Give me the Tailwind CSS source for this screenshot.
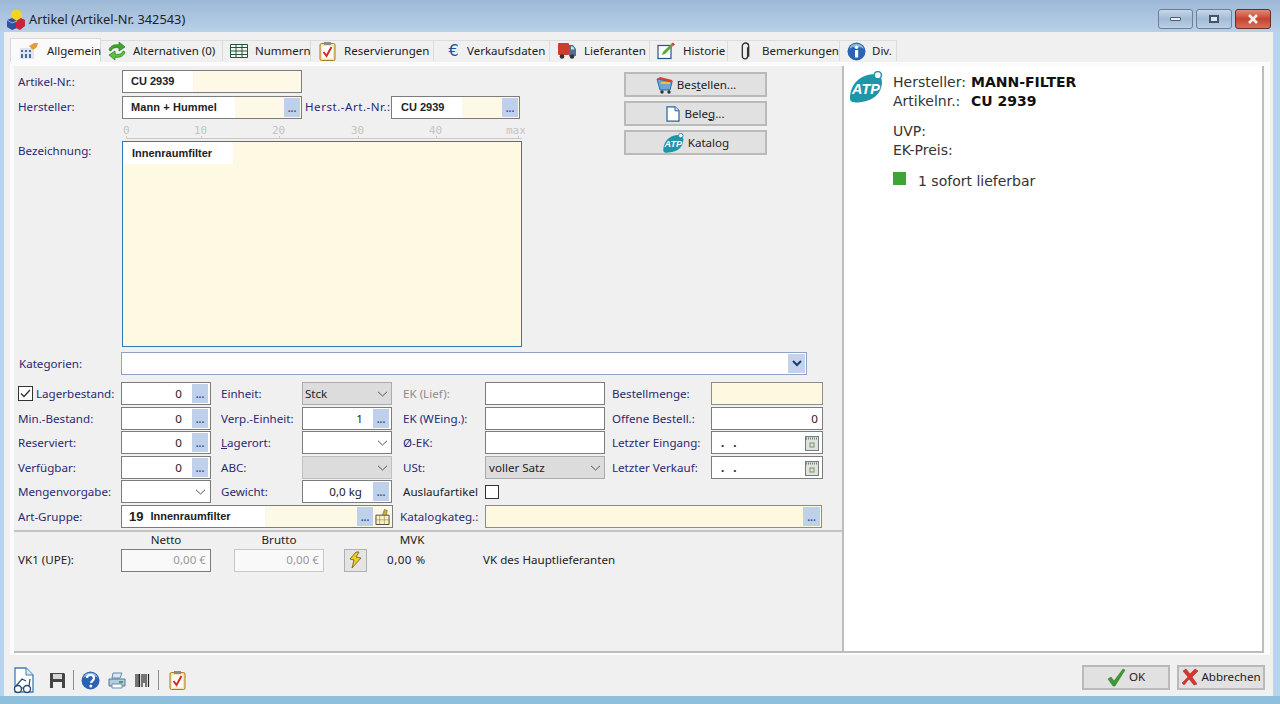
<!DOCTYPE html>
<html lang="de">
<head>
<meta charset="utf-8">
<title>Artikel</title>
<script src="https://cdn.jsdelivr.net/npm/@tailwindcss/browser@4"></script>
</head>
<body class="w-[1280px] h-[704px] overflow-hidden flex flex-col bg-[#b7d3ee] font-['Noto_Sans',sans-serif] text-[11.6px] leading-none text-[#222]">

<!-- Title bar -->
<header class="h-[32px] shrink-0 flex items-center bg-gradient-to-b from-[#9db8d6] to-[#b9d0e8] pl-[6px] pr-[9px] pt-[6px]">
  <svg width="20" height="22" viewBox="0 0 20 22" class="mr-[3px]"><circle cx="10.500" cy="7" r="5.500" fill="#f4d422"/><path d="M1 12l5-2 5 3v7l-5 2-5-3z" fill="#33509e"/><path d="M10 13l5-3 4 2v6l-5 4-4-2z" fill="#c8243c"/><path d="M1 12l5 3 5-2" fill="none" stroke="#9cb2e0"/></svg>
  <span class="text-[12.800px] text-[#222] flex-1">Artikel (Artikel-Nr. 342543)</span>
  <div class="flex gap-[3px] items-start">
    <div class="w-[35px] h-[20px] rounded-[3px] border border-[#6c7f96] bg-gradient-to-b from-[#c6d6e8] via-[#a3bbd6] to-[#bcd0e6] flex items-center justify-center"><div class="w-[11px] h-[4px] bg-[#e8eef5] border border-[#4c5c70] rounded-[1px]"></div></div>
    <div class="w-[36px] h-[20px] rounded-[3px] border border-[#6c7f96] bg-gradient-to-b from-[#c6d6e8] via-[#a3bbd6] to-[#bcd0e6] flex items-center justify-center"><div class="w-[10px] h-[8px] border-2 border-[#43536a] bg-[#dfe8f2]"></div></div>
    <div class="w-[36px] h-[20px] rounded-[3px] border border-[#6b2c22] bg-gradient-to-b from-[#dc8a78] via-[#c5432f] to-[#d4705c] flex items-center justify-center"><svg width="12" height="10" viewBox="0 0 12 10"><path d="M2 1l8 8M10 1L2 9" stroke="#f5f0ee" stroke-width="2.600" fill="none"/></svg></div>
  </div>
</header>

<!-- Client area -->
<div class="flex-1 min-h-0 ml-[4px] mr-[7px] bg-[#f0f0f0] flex flex-col">
  <!-- Tabs -->
  <nav class="h-[30px] shrink-0 pl-[6px] flex items-start pt-[6px] text-[11.500px] whitespace-nowrap">
    <div class="w-[91px] h-[24px] bg-[#fafafa] border border-b-0 border-[#d9d9d9] flex items-center"><span class="w-[36px] shrink-0 flex justify-center">
      <svg width="20" height="18" viewBox="0 0 20 18"><rect x="1" y="6" width="14" height="11" fill="#dfe5ee"/><path d="M2 8h2v2H2zm4 0h2v2H6zm4 0h2v2h-2zM2 12h2v4H2zm4 0h2v4H6zm4 0h2v4h-2z" fill="#4b6a9c"/><path d="M10 4l5-3h4l-1 4-4 3z" fill="#e0a03a"/></svg></span><span>Allgemein</span></div>
    <div class="w-[122px] h-[21px] mt-[2px] bg-[#f0f0f0] border-r border-t border-[#dcdcdc] flex items-center"><span class="w-[32px] shrink-0 flex justify-center">
      <svg width="20" height="20" viewBox="0 0 20 20"><path d="M2 9c1-4 5-6 10-5V1l6 5-6 4V7C8 6 5 7 4 10z" fill="#3fa82c" stroke="#1f7a18" stroke-width=".7"/><path d="M18 11c-1 4-5 6-10 5v3l-6-5 6-4v3c4 1 7 0 8-3z" fill="#5cc23a" stroke="#1f7a18" stroke-width=".7"/></svg></span><span>Alternativen (0)</span></div>
    <div class="w-[88px] h-[21px] mt-[2px] border-r border-t border-[#dcdcdc] flex items-center"><span class="w-[32px] shrink-0 flex justify-center">
      <svg width="18" height="14" viewBox="0 0 18 14"><path d="M.5.500h17v13H.5zM.5 3.500h17M.5 7h17M.5 10.500h17M6 .5v13M12 .5v13" fill="#f4f7f2" stroke="#27553c"/></svg></span><span>Nummern</span></div>
    <div class="w-[123px] h-[21px] mt-[2px] border-r border-t border-[#dcdcdc] flex items-center"><span class="w-[33px] shrink-0 flex justify-center">
      <svg width="17" height="20" viewBox="0 0 17 20"><rect x="1" y="2.500" width="15" height="17" rx="1.500" fill="#f3e3a8" stroke="#a87b1e"/><rect x="3" y="5" width="11" height="12.500" fill="#fff"/><rect x="5" y="1" width="7" height="3" fill="#8c8c8c"/><path d="M4.500 11l3 4 5-9" fill="none" stroke="#d62a1e" stroke-width="2"/></svg></span><span>Reservierungen</span></div>
    <div class="w-[116px] h-[21px] mt-[2px] border-r border-t border-[#dcdcdc] flex items-center"><span class="w-[33px] shrink-0 pl-[6px] flex justify-center font-['DejaVu_Sans',sans-serif] text-[16px] text-[#1f4fa8]">€</span><span>Verkaufsdaten</span></div>
    <div class="w-[100px] h-[21px] mt-[2px] border-r border-t border-[#dcdcdc] flex items-center"><span class="w-[34px] shrink-0 flex justify-center">
      <svg width="20" height="18" viewBox="0 0 20 18"><rect x="1" y="1" width="11" height="12" rx="1" fill="#cf3b2c"/><path d="M12 3h4l3 4v7h-7z" fill="#55708f"/><path d="M14 4.500h2l1.500 3H14z" fill="#cfe2f2"/><circle cx="5" cy="14.500" r="2.300" fill="#333"/><circle cx="15" cy="14.500" r="2.300" fill="#333"/></svg></span><span>Lieferanten</span></div>
    <div class="w-[78px] h-[21px] mt-[2px] border-r border-t border-[#dcdcdc] flex items-center"><span class="w-[33px] shrink-0 flex justify-center">
      <svg width="19" height="18" viewBox="0 0 19 18"><rect x="1" y="3.500" width="13" height="13" fill="#fff" stroke="#27508a" stroke-width="1.200"/><path d="M5 13l1-3 8-8 2 2-8 8z" fill="#55a83a"/><path d="M14 2l2-1.500 2 2-2 1.500z" fill="#d23a3a"/></svg></span><span>Historie</span></div>
    <div class="w-[112px] h-[21px] mt-[2px] border-r border-t border-[#dcdcdc] flex items-center"><span class="w-[34px] shrink-0 flex justify-center">
      <svg width="11" height="19" viewBox="0 0 10 18"><path d="M7 5v8.500a2.500 2.500 0 0 1-5 0V4a3 3 0 0 1 6 0v10" fill="none" stroke="#333" stroke-width="1.300"/></svg></span><span>Bemerkungen</span></div>
    <div class="w-[57px] h-[21px] mt-[2px] border-r border-t border-[#dcdcdc] flex items-center"><span class="w-[32px] shrink-0 flex justify-center">
      <svg width="19" height="19" viewBox="0 0 19 19"><circle cx="9.500" cy="9.500" r="9" fill="#2a62b4"/><path d="M2 7a8 8 0 0 1 15 0c-4-3-11-3-15 0z" fill="#8db4e6"/><rect x="8" y="8" width="3.200" height="7.500" fill="#fff"/><circle cx="9.600" cy="5.200" r="1.800" fill="#fff"/></svg></span><span>Div.</span></div>
  </nav>

  <!-- Tab page -->
  <main class="ml-[6px] mr-[3px] h-[593px] shrink-0 bg-[#fbfbfb] pl-[4px] pr-[6px] pt-[4px]">
    <div class="h-[587px] flex border-b-2 border-[#bdbdbd] border-r-2">
      <!-- Left form -->
      <section class="w-[830px] shrink-0 bg-[#f0f0f0] border-r-2 border-[#bdbdbd] flex flex-col text-[#2a2a72]">
        <div class="flex h-[280px]">
          <div class="w-[510px] shrink-0 pl-[4px] pt-[4px]">
            <div class="flex h-[26px]">
              <span class="w-[104px] pt-[6px]">Artikel-Nr.:</span>
              <div class="w-[180px] h-[23px] border border-[#7c7c7c] bg-[#fdf9e6] flex items-center"><span class="w-[70px] h-full pl-[8px] bg-white flex items-center font-['Liberation_Sans',sans-serif] font-bold text-[11px] text-[#222]">CU 2939</span></div>
            </div>
            <div class="flex h-[26px]">
              <span class="w-[104px] pt-[5px]">Hersteller:</span>
              <div class="w-[180px] h-[23px] border border-[#7c7c7c] bg-[#fdf9e6] flex items-center">
                <span class="w-[112px] h-full pl-[8px] bg-white flex items-center font-['Liberation_Sans',sans-serif] font-bold text-[11px] tracking-[0.1px] text-[#222]">Mann + Hummel</span>
                <span class="flex-1"></span>
                <span class="w-[16px] h-[19px] mr-px bg-[#bfd0ea] text-[#33508a] font-bold text-[10px] flex items-end justify-center pb-[4px]">...</span>
              </div>
              <span class="w-[89px] pl-[3px] pt-[5px] whitespace-nowrap tracking-[0.5px]">Herst.-Art.-Nr.:</span>
              <div class="w-[129px] h-[23px] border border-[#7c7c7c] bg-[#fdf9e6] flex items-center">
                <span class="w-[70px] h-full pl-[9px] bg-white flex items-center font-['Liberation_Sans',sans-serif] font-bold text-[11px] text-[#222]">CU 2939</span>
                <span class="flex-1"></span>
                <span class="w-[16px] h-[19px] mr-px bg-[#bfd0ea] text-[#33508a] font-bold text-[10px] flex items-end justify-center pb-[4px]">...</span>
              </div>
            </div>
            <!-- Ruler -->
            <div class="ml-[105px] w-[410px] h-[19px] font-['DejaVu_Sans_Mono',monospace] text-[11px] text-[#c4c4c4] flex flex-col">
              <div class="flex h-[14px] pt-[3px]">
                <span class="w-[71px]">0</span><span class="w-[78px]">10</span><span class="w-[79px]">20</span><span class="w-[78px]">30</span><span class="w-[77px]">40</span><span>max</span>
              </div>
              <svg width="400" height="3" viewBox="0 0 400 3" class="ml-[3px]"><path d="M0 2.500h396M.5 0v3M75.500 0v3M153.500 0v3M232.500 0v3M310.500 0v3M392.500 0v3" stroke="#c8c8c8" fill="none"/></svg>
            </div>
            <div class="flex">
              <span class="w-[104px] pt-[4px]">Bezeichnung:</span>
              <div class="w-[400px] h-[206px] border border-[#2f78b8] bg-[#fdf9e3]"><div class="w-[110px] h-[22px] pl-[9px] bg-white flex items-center font-['Liberation_Sans',sans-serif] font-bold text-[11px] text-[#222]">Innenraumfilter</div></div>
            </div>
          </div>
          <div class="w-[143px] shrink-0 ml-[100px] pt-[6px] flex flex-col gap-[4px] text-[#222]">
            <div class="h-[25px] bg-[#e1e1e1] border-2 border-[#b9b9b9] flex items-center justify-center gap-[1px]">
              <svg width="21" height="20" viewBox="0 0 21 20"><path d="M2 4l15 3-2 8H5z" fill="#6fa5cf" stroke="#2f6a9a"/><path d="M2 4l3-2 12 3 1 2z" fill="#d83c32"/><path d="M6 8h9" stroke="#e6c63a" stroke-width="2"/><circle cx="7" cy="17" r="1.700" fill="#333"/><circle cx="14" cy="17" r="1.700" fill="#333"/></svg>
              <span>Bes<u>t</u>ellen...</span></div>
            <div class="h-[25px] bg-[#e1e1e1] border-2 border-[#b9b9b9] flex items-center justify-center gap-[4px]">
              <svg width="14" height="16" viewBox="0 0 14 16"><path d="M1 .8h8l4 4v10.400H1z" fill="#fff" stroke="#2b5f9c" stroke-width="1.200"/><path d="M9 .8v4h4" fill="#dbe8f5" stroke="#2b5f9c"/></svg>
              <span>Bele<u>g</u>...</span></div>
            <div class="h-[25px] bg-[#e1e1e1] border-2 border-[#b9b9b9] flex items-center justify-center gap-[4px]">
              <svg width="22" height="20" viewBox="0 0 34 31"><path d="M2 27C2 14 10 4 24 3c7 0 9 3 9 8 0 11-9 18-20 19-6 1-11 1-11-3z" fill="#1e96a8"/><circle cx="29" cy="4" r="3.500" fill="#fff" stroke="#1e96a8" stroke-width="1.500"/><text x="4" y="22" font-family="Liberation Sans" font-weight="bold" font-style="italic" font-size="14" fill="#fff">ATP</text></svg>
              <span>Katalog</span></div>
          </div>
        </div>

        <!-- Kategorien -->
        <div class="flex items-center h-[23px] mt-[6px] pl-[5px]">
          <span class="w-[102px]">Kategorien:</span>
          <div class="w-[686px] h-[23px] border border-[#8fa3c0] bg-white flex items-center justify-end pr-px">
            <span class="w-[17px] h-[19px] bg-[#c3d3ea] flex items-center justify-center"><svg width="10" height="7" viewBox="0 0 10 7"><path d="M1 1l4 4 4-4" stroke="#1f3a6e" stroke-width="2" fill="none"/></svg></span>
          </div>
        </div>

        <!-- Main field grid -->
        <div class="grid mt-[7px] pl-[4px] grid-cols-[103px_90px_91px_90px_93px_120px_106px_112px] grid-rows-[25px_24px_25px_24px_25px_24px] items-start">
          <span class="flex items-center h-[23px] gap-[3px] whitespace-nowrap"><span class="w-[15px] h-[15px] border border-[#333] bg-white flex items-center justify-center"><svg width="11" height="9" viewBox="0 0 11 9"><path d="M1 4.500l3 3 6-6.500" stroke="#333" stroke-width="1.300" fill="none"/></svg></span>Lagerbestand:</span>
          <div class="h-[23px] border border-[#7c7c7c] bg-white flex items-center justify-end pr-[2px] text-[#222]"><span class="pr-[10px]">0</span><span class="w-[16px] h-[19px] bg-[#bfd0ea] text-[#33508a] font-bold text-[10px] flex items-end justify-center pb-[4px]">...</span></div>
          <span class="h-[23px] pl-[10px] flex items-center">Einheit:</span>
          <div class="h-[23px] border border-[#ababab] bg-[#dcdcdc] flex items-center justify-between pl-[2px] pr-[3px] text-[#222]"><span>Stck</span><svg width="11" height="6" viewBox="0 0 11 6"><path d="M1 .8l4.500 4.200L10 .8" stroke="#555" fill="none"/></svg></div>
          <span class="h-[23px] pl-[11px] flex items-center text-[#8c8c8c]">EK (Lief):</span>
          <div class="h-[23px] border border-[#7c7c7c] bg-white"></div>
          <span class="h-[23px] pl-[7px] flex items-center">Bestellmenge:</span>
          <div class="h-[23px] border border-[#8c8c8c] bg-[#fdf9e0]"></div>

          <span class="h-[23px] flex items-center">Min.-Bestand:</span>
          <div class="h-[23px] border border-[#7c7c7c] bg-white flex items-center justify-end pr-[2px] text-[#222]"><span class="pr-[10px]">0</span><span class="w-[16px] h-[19px] bg-[#bfd0ea] text-[#33508a] font-bold text-[10px] flex items-end justify-center pb-[4px]">...</span></div>
          <span class="h-[23px] pl-[10px] flex items-center">Verp.-Einheit:</span>
          <div class="h-[23px] border border-[#7c7c7c] bg-white flex items-center justify-end pr-[2px] text-[#222]"><span class="pr-[10px]">1</span><span class="w-[16px] h-[19px] bg-[#bfd0ea] text-[#33508a] font-bold text-[10px] flex items-end justify-center pb-[4px]">...</span></div>
          <span class="h-[23px] pl-[11px] flex items-center">EK (WEing.):</span>
          <div class="h-[23px] border border-[#7c7c7c] bg-white"></div>
          <span class="h-[23px] pl-[7px] flex items-center">Offene Bestell.:</span>
          <div class="h-[23px] border border-[#7c7c7c] bg-white flex items-center justify-end pr-[4px] text-[#222]">0</div>

          <span class="h-[23px] flex items-center">Reserviert:</span>
          <div class="h-[23px] border border-[#7c7c7c] bg-white flex items-center justify-end pr-[2px] text-[#222]"><span class="pr-[10px]">0</span><span class="w-[16px] h-[19px] bg-[#bfd0ea] text-[#33508a] font-bold text-[10px] flex items-end justify-center pb-[4px]">...</span></div>
          <span class="h-[23px] pl-[10px] flex items-center"><span><u>L</u>agerort:</span></span>
          <div class="h-[23px] border border-[#7c7c7c] bg-white flex items-center justify-end pr-[3px]"><svg width="11" height="6" viewBox="0 0 11 6"><path d="M1 .8l4.500 4.200L10 .8" stroke="#555" fill="none"/></svg></div>
          <span class="h-[23px] pl-[11px] flex items-center">Ø-EK:</span>
          <div class="h-[23px] border border-[#7c7c7c] bg-white"></div>
          <span class="h-[23px] pl-[7px] flex items-center">Letzter Eingang:</span>
          <div class="h-[23px] border border-[#7c7c7c] bg-white flex items-center justify-between pl-[9px] pr-[3px] text-[#222]"><span class="font-bold tracking-[3px]">. .</span><svg width="14" height="16" viewBox="0 0 14 16"><rect x=".5" y="1.500" width="13" height="14" fill="#dfe3dc" stroke="#6f7f78"/><path d="M1 3.500h12" stroke="#6f7f78" stroke-width="2" stroke-dasharray="1 1"/><rect x="5" y="8" width="4" height="4" fill="none" stroke="#7f8f70"/></svg></div>

          <span class="h-[23px] flex items-center">Verfügbar:</span>
          <div class="h-[23px] border border-[#7c7c7c] bg-white flex items-center justify-end pr-[2px] text-[#222]"><span class="pr-[10px]">0</span><span class="w-[16px] h-[19px] bg-[#bfd0ea] text-[#33508a] font-bold text-[10px] flex items-end justify-center pb-[4px]">...</span></div>
          <span class="h-[23px] pl-[10px] flex items-center">ABC:</span>
          <div class="h-[23px] border border-[#c0c0c0] bg-[#dcdcdc] flex items-center justify-end pr-[3px]"><svg width="11" height="6" viewBox="0 0 11 6"><path d="M1 .8l4.500 4.200L10 .8" stroke="#555" fill="none"/></svg></div>
          <span class="h-[23px] pl-[11px] flex items-center">USt:</span>
          <div class="h-[23px] border border-[#ababab] bg-[#dcdcdc] flex items-center justify-between pl-[3px] pr-[3px] text-[#222]"><span>voller Satz</span><svg width="11" height="6" viewBox="0 0 11 6"><path d="M1 .8l4.500 4.200L10 .8" stroke="#555" fill="none"/></svg></div>
          <span class="h-[23px] pl-[7px] flex items-center">Letzter Verkauf:</span>
          <div class="h-[23px] border border-[#7c7c7c] bg-white flex items-center justify-between pl-[9px] pr-[3px] text-[#222]"><span class="font-bold tracking-[3px]">. .</span><svg width="14" height="16" viewBox="0 0 14 16"><rect x=".5" y="1.500" width="13" height="14" fill="#dfe3dc" stroke="#6f7f78"/><path d="M1 3.500h12" stroke="#6f7f78" stroke-width="2" stroke-dasharray="1 1"/><rect x="5" y="8" width="4" height="4" fill="none" stroke="#7f8f70"/></svg></div>

          <span class="h-[23px] flex items-center">Mengenvorgabe:</span>
          <div class="h-[23px] border border-[#7c7c7c] bg-white flex items-center justify-end pr-[4px]"><svg width="11" height="6" viewBox="0 0 11 6"><path d="M1 .8l4.500 4.200L10 .8" stroke="#555" fill="none"/></svg></div>
          <span class="h-[23px] pl-[10px] flex items-center">Gewicht:</span>
          <div class="h-[23px] border border-[#7c7c7c] bg-white flex items-center justify-end pr-[2px] text-[#222]"><span class="pr-[11px]">0,0 kg</span><span class="w-[16px] h-[19px] bg-[#bfd0ea] text-[#33508a] font-bold text-[10px] flex items-end justify-center pb-[4px]">...</span></div>
          <span class="h-[23px] pl-[11px] flex items-center text-[#222]">Auslaufartikel</span>
          <div class="h-[23px] flex items-center"><span class="w-[14px] h-[14px] border border-[#333] bg-white"></span></div>
          <span></span><span></span>

          <span class="h-[23px] flex items-center">Art-Gruppe:</span>
          <div class="col-span-3 w-[272px] h-[23px] border border-[#7c7c7c] bg-[#fdf9e6] flex items-center text-[#222]">
            <span class="w-[143px] h-full bg-white pl-[7px] flex items-center gap-[7px] font-['Liberation_Sans',sans-serif] font-bold text-[11px]"><span class="text-[13px]">19</span><span>Innenraumfilter</span></span>
            <span class="flex-1"></span>
            <span class="w-[16px] h-[19px] bg-[#bfd0ea] text-[#33508a] font-bold text-[10px] flex items-end justify-center pb-[4px]">...</span>
            <span class="w-[19px] flex justify-center"><svg width="15" height="18" viewBox="0 0 16 18"><path d="M1 7h14v10H1z" fill="#fdf3b8" stroke="#444"/><path d="M5 7v10M10 7v10M1 12h14" stroke="#777" stroke-width=".6"/><path d="M8 7l2-6 3 1-1 5z" fill="#c9b12c" stroke="#555" stroke-width=".6"/></svg></span>
          </div>
          <span class="h-[23px] pl-[8px] flex items-center whitespace-nowrap">Katalogkateg.:</span>
          <div class="col-span-3 w-[337px] h-[23px] border border-[#8c8c8c] bg-[#fdf9e0] flex items-center justify-end pr-px"><span class="w-[17px] h-[19px] bg-[#bfd0ea] text-[#33508a] font-bold text-[10px] flex items-end justify-center pb-[4px]">...</span></div>
        </div>

        <!-- Prices -->
        <div class="mt-[1px] border-t-2 border-[#c4c4c4] pl-[4px] text-[#222]">
          <div class="flex h-[15px] items-center">
            <span class="w-[103px]"></span><span class="w-[90px] text-center">Netto</span><span class="w-[23px]"></span><span class="w-[90px] text-center">Brutto</span><span class="w-[65px]"></span><span class="w-[46px] text-center">MVK</span>
          </div>
          <div class="flex items-center h-[24px] mt-[1px]">
            <span class="w-[103px]">VK1 (UPE):</span>
            <div class="w-[90px] h-[23px] border border-[#7c7c7c] bg-[#f9f9f9] flex items-center justify-end pr-[4px] text-[#9a9a9a]">0,00 €</div>
            <span class="w-[23px]"></span>
            <div class="w-[90px] h-[23px] border border-[#c8c8c8] bg-[#f9f9f9] flex items-center justify-end pr-[4px] text-[#9a9a9a]">0,00 €</div>
            <span class="w-[20px]"></span>
            <div class="w-[23px] h-[23px] border border-[#b0b0b0] bg-[#e4e4e4] flex items-center justify-center"><svg width="13" height="18" viewBox="0 0 13 18"><path d="M7 1L1 8l4 1-2 8 9-10-5-1 3-5z" fill="#f0cc2a" stroke="#6a5a10" stroke-width=".8"/></svg></div>
            <span class="w-[20px]"></span>
            <span class="w-[96px] tracking-[0.5px]">0,00 %</span>
            <span>VK des Hauptlieferanten</span>
          </div>
        </div>
      </section>

      <!-- Right info panel -->
      <aside class="flex-1 bg-white font-['DejaVu_Sans',sans-serif] text-[14px] text-[#333] pl-[4px] pt-[5px] flex">
        <svg width="35" height="32" viewBox="0 0 34 31" class="shrink-0"><path d="M2 27C2 14 10 4 24 3c7 0 9 3 9 8 0 11-9 18-20 19-6 1-11 1-11-3z" fill="#1e96a8"/><circle cx="29" cy="4" r="3.500" fill="#fff" stroke="#1e96a8" stroke-width="1.500"/><text x="4" y="22" font-family="Liberation Sans" font-weight="bold" font-style="italic" font-size="14" fill="#fff">ATP</text></svg>
        <div class="pl-[10px] pt-[1px]">
          <div class="h-[19px] flex items-center"><span class="w-[78px]">Hersteller:</span><b class="text-[#111]">MANN-FILTER</b></div>
          <div class="h-[19px] flex items-center"><span class="w-[78px]">Artikelnr.:</span><b class="text-[#111]">CU 2939</b></div>
          <div class="h-[19px] mt-[11px] flex items-center">UVP:</div>
          <div class="h-[19px] flex items-center">EK-Preis:</div>
          <div class="mt-[13px] flex items-start h-[16px]"><span class="w-[13px] h-[13px] bg-[#3ea535] mr-[12px]"></span><span class="pt-[2px]">1 sofort lieferbar</span></div>
        </div>
      </aside>
    </div>
  </main>

  <!-- Footer -->
  <footer class="flex-1 flex items-center pl-[8px] pr-[8px] pt-[3px]">
    <div class="flex items-center mt-[6px]">
      <svg width="24" height="27" viewBox="0 0 24 27"><path d="M3 1h11l7 7v17H3z" fill="#fff" stroke="#3f7fb5" stroke-width="1.300"/><path d="M14 1v7h7" fill="#dbe8f5" stroke="#3f7fb5"/><circle cx="6" cy="22" r="3.500" fill="#fff" stroke="#254d7a" stroke-width="1.400"/><circle cx="15" cy="22" r="3.500" fill="#fff" stroke="#254d7a" stroke-width="1.400"/><path d="M9 21h3M4 19l6-7 4 2M17 19l1-7" stroke="#254d7a" stroke-width="1.200" fill="none"/></svg>
      <svg width="17" height="17" viewBox="0 0 17 17" class="ml-[13px]"><path d="M1 1h14l1 1v14H1z" fill="#444"/><rect x="4" y="2" width="9" height="5" fill="#d6d6d6"/><rect x="4" y="10" width="9" height="6" fill="#eee"/></svg>
      <span class="w-px h-[20px] bg-[#8c8c8c] ml-[7px]"></span>
      <svg width="19" height="19" viewBox="0 0 19 19" class="ml-[7px]"><circle cx="9.500" cy="9.500" r="9" fill="#2a62b4"/><path d="M2 7a8 8 0 0 1 15 0c-4-3-11-3-15 0z" fill="#8db4e6"/><path d="M6 7c0-4 7-4 7 0 0 3-3 3-3 5" fill="none" stroke="#fff" stroke-width="2.200"/><circle cx="9.800" cy="15" r="1.500" fill="#fff"/></svg>
      <svg width="18" height="17" viewBox="0 0 18 17" class="ml-[8px]"><path d="M5 1h9l-2 5H4z" fill="#dfe7ee" stroke="#5f8db0"/><path d="M1 7h16v7H1z" fill="#b7cbdc" stroke="#4f7898"/><path d="M4 12h10v4H4z" fill="#fff" stroke="#5f8db0"/><rect x="11" y="9" width="4" height="2" fill="#3fa84a"/></svg>
      <svg width="15" height="15" viewBox="0 0 15 15" class="ml-[9px]"><path d="M1 1v13M3 1v13M4.500 1v13M7 1v13M9 1v9M11 1v13M13.500 1v13" stroke="#222" stroke-width="1.200"/></svg>
      <span class="w-px h-[20px] bg-[#8c8c8c] ml-[8px]"></span>
      <svg width="17" height="20" viewBox="0 0 17 20" class="ml-[10px]"><rect x="1" y="2.500" width="15" height="17" rx="1.500" fill="#f3e3a8" stroke="#a87b1e"/><rect x="3" y="5" width="11" height="12.500" fill="#fff"/><rect x="5" y="1" width="7" height="3" fill="#8c8c8c"/><path d="M4.500 11l3 4 5-9" fill="none" stroke="#d62a1e" stroke-width="2"/></svg>
    </div>
    <div class="flex-1"></div>
    <div class="w-[88px] h-[25px] bg-[#e1e1e1] border-2 border-[#b9b9b9] flex items-center justify-center gap-[3px]"><svg width="19" height="19" viewBox="0 0 19 19"><path d="M1 11l3-2 3 4 9-12 2 1-10 16H6z" fill="#3d9a36" stroke="#276e22" stroke-width=".5"/></svg><span>OK</span></div>
    <div class="w-[88px] h-[25px] ml-[7px] bg-[#e1e1e1] border-2 border-[#b9b9b9] flex items-center justify-center gap-[2px]"><svg width="18" height="18" viewBox="0 0 18 18"><path d="M2 3l3-2 4 5 5-5 3 2-6 6 5 7-3 1-5-6-5 6-2-2 6-6z" fill="#d9362a" stroke="#9c1c14" stroke-width=".5"/></svg><span>Abbrechen</span></div>
  </footer>
</div>
<div class="h-[8px] shrink-0 bg-[#8ebfdc]"></div>
</body>
</html>
